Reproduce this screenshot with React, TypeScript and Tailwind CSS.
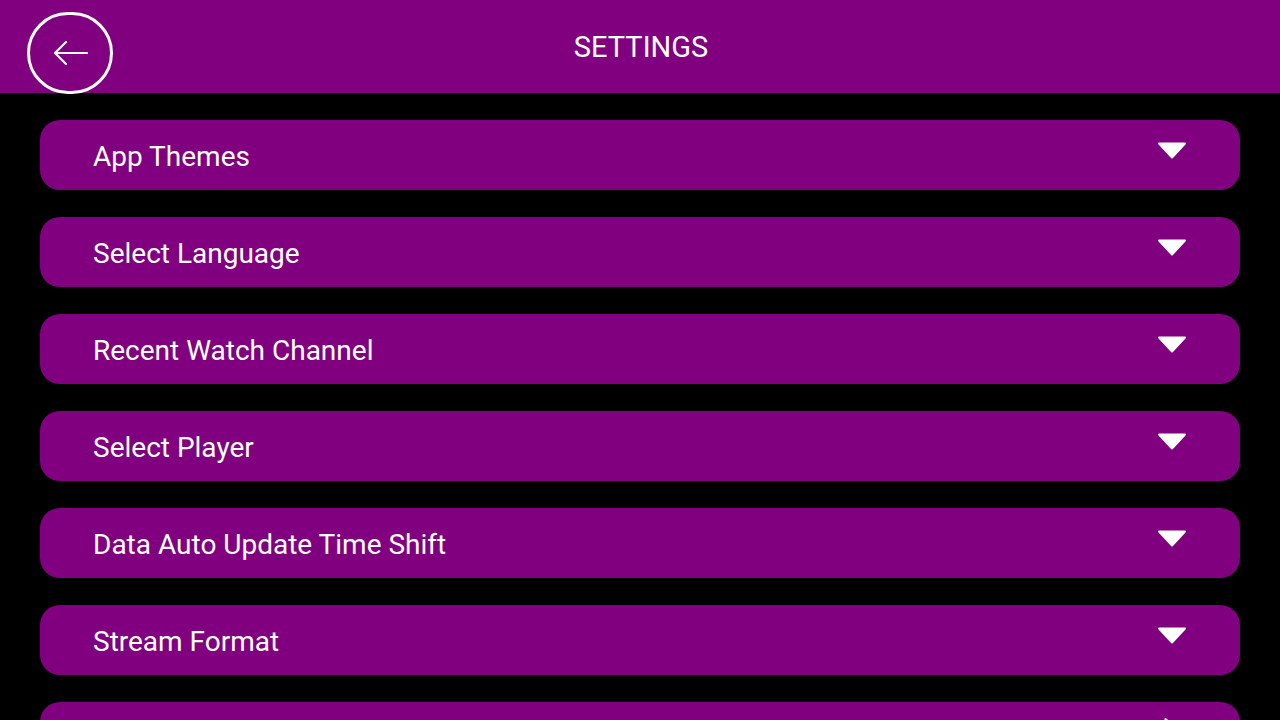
const ITEMS = [
  { label: "App Themes", kind: "down" },
  { label: "Select Language", kind: "down" },
  { label: "Recent Watch Channel", kind: "down" },
  { label: "Select Player", kind: "down" },
  { label: "Data Auto Update Time Shift", kind: "down" },
  { label: "Stream Format", kind: "down" },
  { label: "Parental Control", kind: "right" },
];

function DownCaret() {
  return (
    <svg width="30" height="17" viewBox="0 0 30 17" className="mt-[-10px]">
      <path d="M2 1.5 H28 L15 15.5 Z" fill="#fff" stroke="#fff" strokeWidth="2" strokeLinejoin="round" />
    </svg>
  );
}

function RightCaret() {
  return (
    <svg width="17" height="30" viewBox="0 0 17 30" className="mt-[-10px]">
      <path d="M1.5 2 V28 L15.5 15 Z" fill="#fff" stroke="#fff" strokeWidth="2" strokeLinejoin="round" />
    </svg>
  );
}

export default function App() {
  return (
    <div className="min-h-screen bg-black text-white" style={{ fontFamily: "Roboto, 'Liberation Sans', sans-serif" }}>
      {/* Header */}
      <header className="relative h-[93px] bg-[#800080] flex items-center justify-center">
        <button className="absolute left-[27px] top-[12px] w-[86px] h-[82px] rounded-full border-[3px] border-white flex items-center justify-center">
          <svg width="36" height="28" viewBox="0 0 36 28">
            <path d="M3 14 H35 M14 3 L3 14 L14 25" fill="none" stroke="#fff" strokeWidth="2.2" strokeLinecap="round" strokeLinejoin="round" />
          </svg>
        </button>
        <h1 className="text-[29px] leading-none mt-[2px] pl-[2px]">SETTINGS</h1>
      </header>

      {/* Rows */}
      <div className="flex flex-col gap-[27px] px-[40px] pt-[27px] pb-8">
        {ITEMS.map((item) => (
          <div
            key={item.label}
            className="h-[70px] rounded-[20px] bg-[#800080] flex items-center justify-between pl-[53px] pr-[53px]"
          >
            <span className="text-[28px] leading-none mt-[3px]">{item.label}</span>
            <span className="w-[30px] flex justify-center">
              {item.kind === "down" ? <DownCaret /> : <RightCaret />}
            </span>
          </div>
        ))}
      </div>
    </div>
  );
}
